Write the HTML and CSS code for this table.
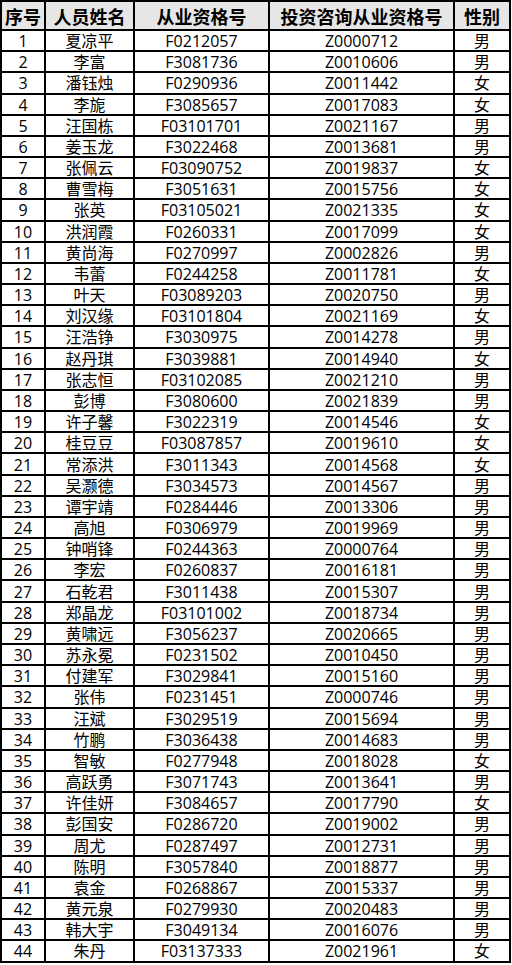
FILE: index.html
```html
<!DOCTYPE html>
<html lang="zh-CN">
<head>
<meta charset="utf-8">
<title>投资咨询从业资格</title>
<link rel="stylesheet" href="styles.css">
</head>
<body>
<div class="sheet">
<div class="c h">序号</div><div class="c h">人员姓名</div><div class="c h">从业资格号</div><div class="c h">投资咨询从业资格号</div><div class="c h">性别</div>
<div class="c">1</div><div class="c">夏凉平</div><div class="c">F0212057</div><div class="c">Z0000712</div><div class="c">男</div>
<div class="c">2</div><div class="c">李富</div><div class="c">F3081736</div><div class="c">Z0010606</div><div class="c">男</div>
<div class="c">3</div><div class="c">潘钰烛</div><div class="c">F0290936</div><div class="c">Z0011442</div><div class="c">女</div>
<div class="c">4</div><div class="c">李旎</div><div class="c">F3085657</div><div class="c">Z0017083</div><div class="c">女</div>
<div class="c">5</div><div class="c">汪国栋</div><div class="c">F03101701</div><div class="c">Z0021167</div><div class="c">男</div>
<div class="c">6</div><div class="c">姜玉龙</div><div class="c">F3022468</div><div class="c">Z0013681</div><div class="c">男</div>
<div class="c">7</div><div class="c">张佩云</div><div class="c">F03090752</div><div class="c">Z0019837</div><div class="c">女</div>
<div class="c">8</div><div class="c">曹雪梅</div><div class="c">F3051631</div><div class="c">Z0015756</div><div class="c">女</div>
<div class="c">9</div><div class="c">张英</div><div class="c">F03105021</div><div class="c">Z0021335</div><div class="c">女</div>
<div class="c">10</div><div class="c">洪润霞</div><div class="c">F0260331</div><div class="c">Z0017099</div><div class="c">女</div>
<div class="c">11</div><div class="c">黄尚海</div><div class="c">F0270997</div><div class="c">Z0002826</div><div class="c">男</div>
<div class="c">12</div><div class="c">韦蕾</div><div class="c">F0244258</div><div class="c">Z0011781</div><div class="c">女</div>
<div class="c">13</div><div class="c">叶天</div><div class="c">F03089203</div><div class="c">Z0020750</div><div class="c">男</div>
<div class="c">14</div><div class="c">刘汉缘</div><div class="c">F03101804</div><div class="c">Z0021169</div><div class="c">女</div>
<div class="c">15</div><div class="c">汪浩铮</div><div class="c">F3030975</div><div class="c">Z0014278</div><div class="c">男</div>
<div class="c">16</div><div class="c">赵丹琪</div><div class="c">F3039881</div><div class="c">Z0014940</div><div class="c">女</div>
<div class="c">17</div><div class="c">张志恒</div><div class="c">F03102085</div><div class="c">Z0021210</div><div class="c">男</div>
<div class="c">18</div><div class="c">彭博</div><div class="c">F3080600</div><div class="c">Z0021839</div><div class="c">男</div>
<div class="c">19</div><div class="c">许子馨</div><div class="c">F3022319</div><div class="c">Z0014546</div><div class="c">女</div>
<div class="c">20</div><div class="c">桂豆豆</div><div class="c">F03087857</div><div class="c">Z0019610</div><div class="c">女</div>
<div class="c">21</div><div class="c">常添洪</div><div class="c">F3011343</div><div class="c">Z0014568</div><div class="c">女</div>
<div class="c">22</div><div class="c">吴灏德</div><div class="c">F3034573</div><div class="c">Z0014567</div><div class="c">男</div>
<div class="c">23</div><div class="c">谭宇靖</div><div class="c">F0284446</div><div class="c">Z0013306</div><div class="c">男</div>
<div class="c">24</div><div class="c">高旭</div><div class="c">F0306979</div><div class="c">Z0019969</div><div class="c">男</div>
<div class="c">25</div><div class="c">钟哨锋</div><div class="c">F0244363</div><div class="c">Z0000764</div><div class="c">男</div>
<div class="c">26</div><div class="c">李宏</div><div class="c">F0260837</div><div class="c">Z0016181</div><div class="c">男</div>
<div class="c">27</div><div class="c">石乾君</div><div class="c">F3011438</div><div class="c">Z0015307</div><div class="c">男</div>
<div class="c">28</div><div class="c">郑晶龙</div><div class="c">F03101002</div><div class="c">Z0018734</div><div class="c">男</div>
<div class="c">29</div><div class="c">黄啸远</div><div class="c">F3056237</div><div class="c">Z0020665</div><div class="c">男</div>
<div class="c">30</div><div class="c">苏永冕</div><div class="c">F0231502</div><div class="c">Z0010450</div><div class="c">男</div>
<div class="c">31</div><div class="c">付建军</div><div class="c">F3029841</div><div class="c">Z0015160</div><div class="c">男</div>
<div class="c">32</div><div class="c">张伟</div><div class="c">F0231451</div><div class="c">Z0000746</div><div class="c">男</div>
<div class="c">33</div><div class="c">汪斌</div><div class="c">F3029519</div><div class="c">Z0015694</div><div class="c">男</div>
<div class="c">34</div><div class="c">竹鹏</div><div class="c">F3036438</div><div class="c">Z0014683</div><div class="c">男</div>
<div class="c">35</div><div class="c">智敏</div><div class="c">F0277948</div><div class="c">Z0018028</div><div class="c">女</div>
<div class="c">36</div><div class="c">高跃勇</div><div class="c">F3071743</div><div class="c">Z0013641</div><div class="c">男</div>
<div class="c">37</div><div class="c">许佳妍</div><div class="c">F3084657</div><div class="c">Z0017790</div><div class="c">女</div>
<div class="c">38</div><div class="c">彭国安</div><div class="c">F0286720</div><div class="c">Z0019002</div><div class="c">男</div>
<div class="c">39</div><div class="c">周尤</div><div class="c">F0287497</div><div class="c">Z0012731</div><div class="c">男</div>
<div class="c">40</div><div class="c">陈明</div><div class="c">F3057840</div><div class="c">Z0018877</div><div class="c">男</div>
<div class="c">41</div><div class="c">袁金</div><div class="c">F0268867</div><div class="c">Z0015337</div><div class="c">男</div>
<div class="c">42</div><div class="c">黄元泉</div><div class="c">F0279930</div><div class="c">Z0020483</div><div class="c">男</div>
<div class="c">43</div><div class="c">韩大宇</div><div class="c">F3049134</div><div class="c">Z0016076</div><div class="c">男</div>
<div class="c">44</div><div class="c">朱丹</div><div class="c">F03137333</div><div class="c">Z0021961</div><div class="c">女</div>
</div>
</body>
</html>
```
FILE: styles.css
```css
html, body {
  margin: 0;
  padding: 0;
  background: #ffffff;
}
body {
  font-family: "Open Sans", "Noto Sans CJK SC", sans-serif;
  font-size: 16px;
  color: #000000;
}
.sheet {
  display: grid;
  grid-template-columns: 44px 89px 135px 185px 56px;
  grid-template-rows: 29px;
  grid-auto-rows: 21.18px;
  width: 509px;
  border-top: 2px solid #000;
  border-left: 2px solid #000;
}
.c {
  box-sizing: border-box;
  border-right: 2px solid #000;
  border-bottom: 2px solid #000;
  display: flex;
  align-items: center;
  justify-content: center;
  line-height: 1;
  white-space: nowrap;
  overflow: hidden;
  padding-top: 1px;
}
.h {
  background: #e7e6e6;
  font-family: "Noto Sans CJK SC", sans-serif;
  font-weight: 700;
  font-size: 18px;
  padding-top: 0;
}
```
